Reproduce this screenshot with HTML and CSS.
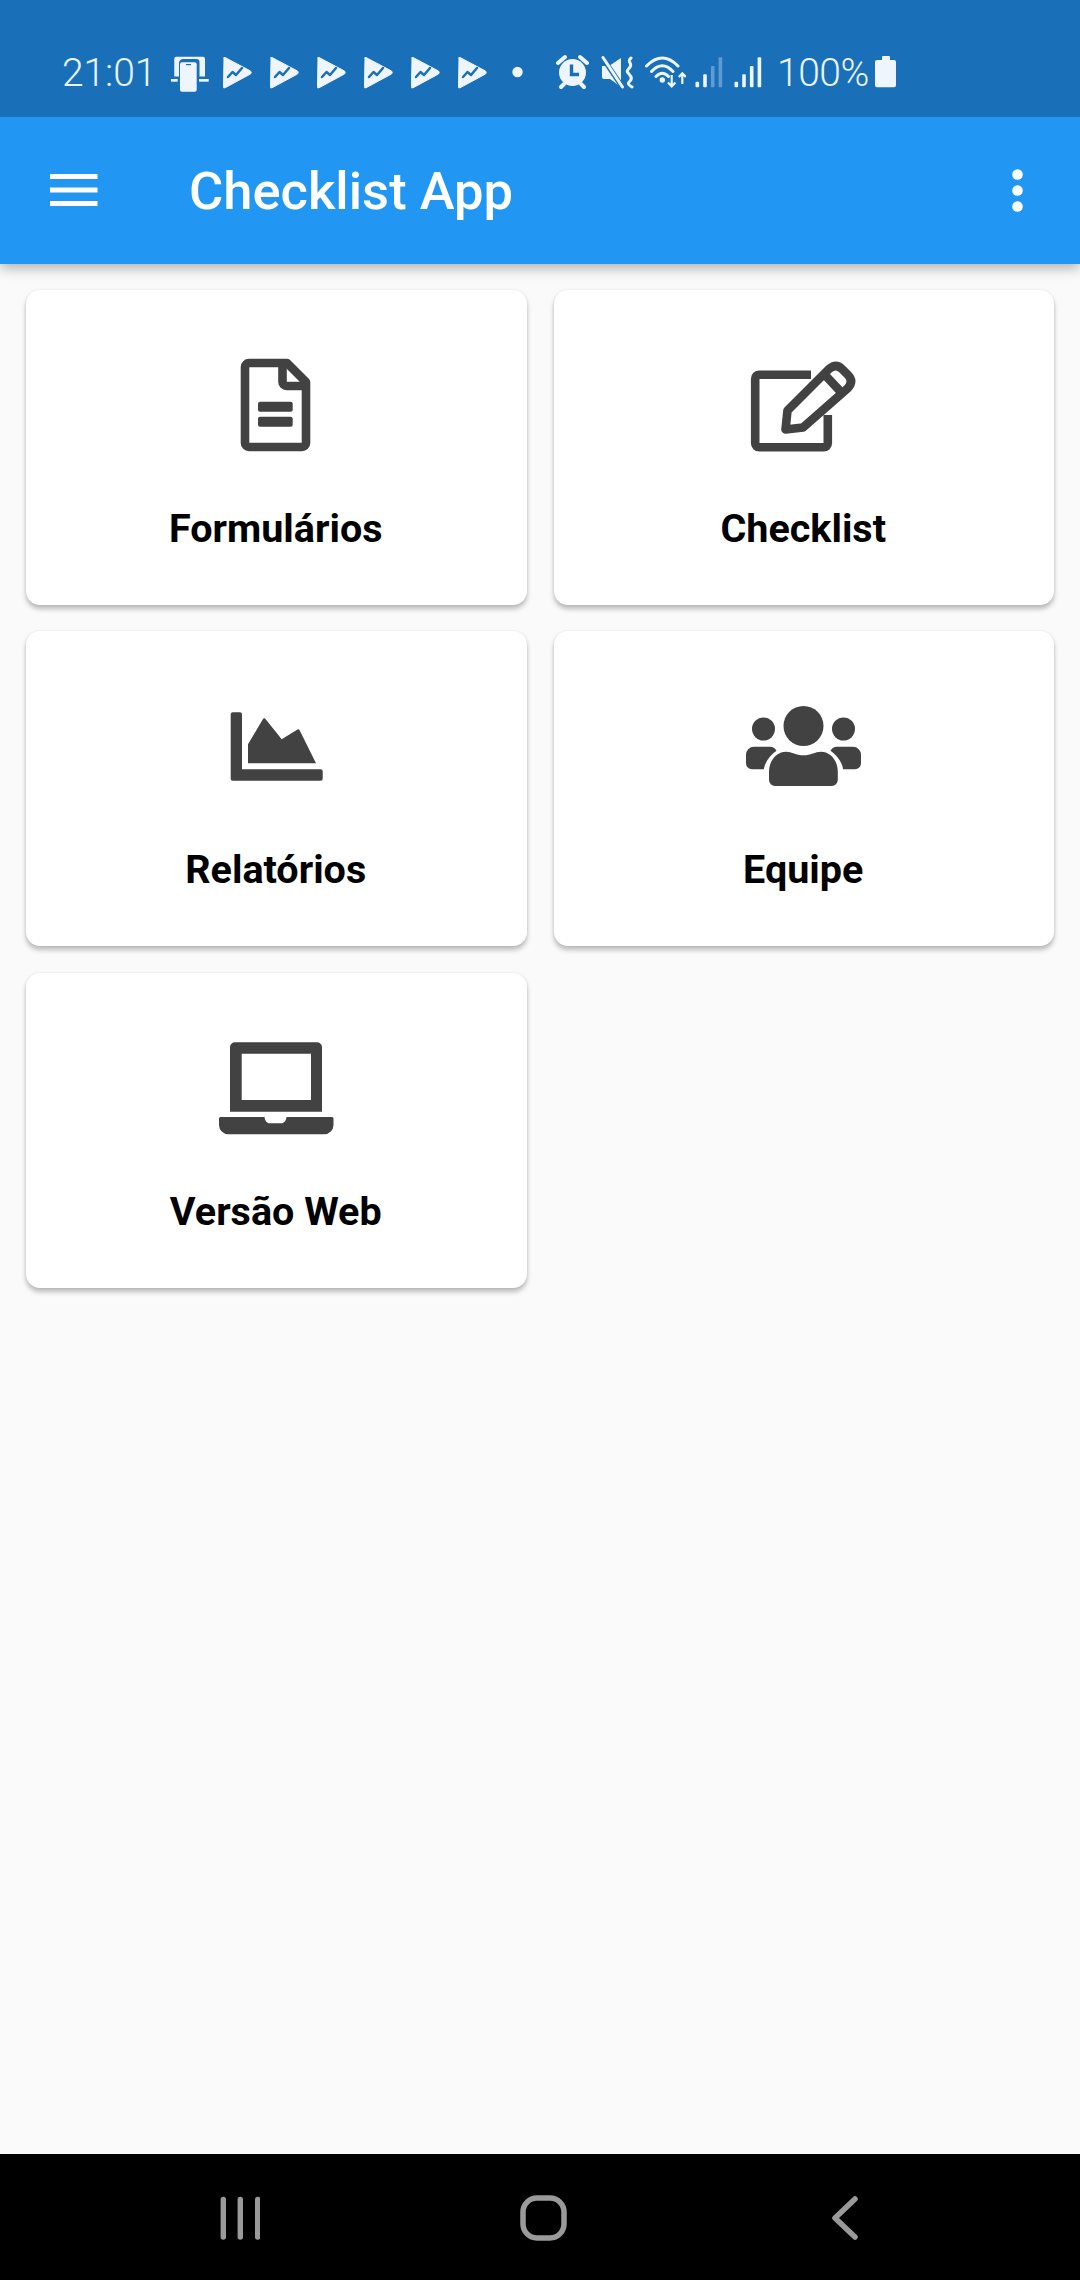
FILE: index.html
```html
<!DOCTYPE html>
<html lang="pt">
<head>
<meta charset="utf-8">
<title>Checklist App</title>
<link rel="stylesheet" href="styles.css">
</head>
<body>
<svg class="defs" width="0" height="0" aria-hidden="true">
  <symbol id="play" viewBox="0 0 29 40">
    <path class="si" d="M1 7 Q0 5 2 5.5 L27.5 19 Q29 20.5 27.5 22 L2 35.8 Q0 36.5 0.5 34.5 Z" stroke="#eef5fc" stroke-width="1" stroke-linejoin="round"/>
    <path class="sd" d="M5 25 L9.5 20 L13 23 L19 16"/>
  </symbol>
</svg>
<div class="page">
  <header class="top">
    <div class="status">
      <span class="clock">21:01</span>
      <svg class="ic-link" viewBox="0 0 38 40" width="38" height="40">
        <path class="si" d="M3.3 24.5V6.7a2 2 0 0 1 2-2h26.7a2 2 0 0 1 2 2v17.8h-5.5V10a3 3 0 0 0-3-3H12a4.500 4.500 0 0 0-4 3.500v14z"/>
        <rect class="si" x="0" y="27" width="6.700" height="2.700"/>
        <rect class="si" x="28" y="27" width="9.700" height="2.700"/>
        <rect class="si" x="9" y="10.300" width="16.700" height="29.400" rx="2"/>
        <rect class="sk" x="15" y="12" width="5" height="1.200"/>
      </svg>
      <svg class="ic-play first" width="29" height="40"><use href="#play"/></svg>
      <svg class="ic-play" width="29" height="40"><use href="#play"/></svg>
      <svg class="ic-play" width="29" height="40"><use href="#play"/></svg>
      <svg class="ic-play" width="29" height="40"><use href="#play"/></svg>
      <svg class="ic-play" width="29" height="40"><use href="#play"/></svg>
      <svg class="ic-play" width="29" height="40"><use href="#play"/></svg>
      <svg class="ic-dot" viewBox="0 0 11 40" width="11" height="40"><circle class="si" cx="5.500" cy="20" r="5.200"/></svg>
      <svg class="ic-alarm" viewBox="0 0 34 40" width="34" height="40">
        <circle class="si" cx="16.500" cy="20.500" r="13.500"/>
        <path class="sl sl-thick" d="M2 11L9 5M31 11L24 5"/>
        <path class="sl sl-thick" d="M8 32l-3 3M25 32l3 3"/>
        <path class="sd sd-thick" d="M15.500 12.500V22.500h7.500"/>
      </svg>
      <svg class="ic-mute" viewBox="0 0 33 40" width="33" height="40">
        <path class="si" d="M1 14H8L20 6V35L9 27H3a2 2 0 0 1-2-2z"/>
        <path class="sg" d="M-1 2L22 36"/>
        <path class="sl" d="M2 5.500L21.500 35"/>
        <path class="sl" d="M30 6c-5 4 2 5-1 9s-4 4-1 7 3 5 1 7-3 3 2 6"/>
      </svg>
      <svg class="ic-wifi" viewBox="0 0 41 40" width="41" height="40">
        <path class="sw" d="M1.500 14Q17.300-2 33 14M6.500 19.500Q17.300 8 28 19.500M11 24.500Q17.300 18 23.500 24.500"/>
        <circle class="si" cx="17.300" cy="28" r="2.700"/>
        <path class="sa" d="M26.700 23V34M23 30.500l3.700 4 3.700-4M37.300 32V21.500M33.800 25l3.500-3.700 3.500 3.700"/>
      </svg>
      <svg class="ic-sig" viewBox="0 0 28 40" width="28" height="40">
        <rect class="si" x="0.500" y="29.700" width="3.600" height="5.600" rx="1"/>
        <rect class="si" x="8.200" y="22.300" width="3.600" height="13" rx="1"/>
        <rect class="sq" x="15.900" y="14" width="3.600" height="21.300" rx="1"/>
        <rect class="sq" x="23.600" y="5.300" width="3.600" height="30" rx="1"/>
      </svg>
      <svg class="ic-sig2" viewBox="0 0 28 40" width="28" height="40">
        <rect class="si" x="0.500" y="29.700" width="3.600" height="5.600" rx="1"/>
        <rect class="si" x="8.200" y="22.300" width="3.600" height="13" rx="1"/>
        <rect class="si" x="15.900" y="14" width="3.600" height="21.300" rx="1"/>
        <rect class="si" x="23.600" y="5.300" width="3.600" height="30" rx="1"/>
      </svg>
      <span class="pct">100%</span>
      <svg class="ic-batt" viewBox="0 0 22 40" width="22" height="40">
        <path class="si" d="M7 5a1 1 0 0 1 1-1h6a1 1 0 0 1 1 1v3h4a2 2 0 0 1 2 2v23.300a2 2 0 0 1-2 2H2a2 2 0 0 1-2-2V10a2 2 0 0 1 2-2h5z"/>
      </svg>
    </div>
    <div class="appbar">
      <svg class="menu" viewBox="0 0 48 33" width="48" height="33">
        <rect x="0" y="0" width="47.500" height="5"/>
        <rect x="0" y="13.500" width="47.500" height="5"/>
        <rect x="0" y="27" width="47.500" height="5"/>
      </svg>
      <h1 class="title">Checklist App</h1>
      <svg class="kebab" viewBox="0 0 11 43" width="11" height="43">
        <circle cx="5.500" cy="5.500" r="5.300"/>
        <circle cx="5.500" cy="21.500" r="5.300"/>
        <circle cx="5.500" cy="37.500" r="5.300"/>
      </svg>
    </div>
  </header>

  <main class="grid">
    <div class="card">
      <svg class="icon" viewBox="0 0 120 100" width="120" height="100">
        <path class="line" d="M33 8H71L90 27V88a4 4 0 0 1-4 4H33a4 4 0 0 1-4-4V12a4 4 0 0 1 4-4z"/>
        <path class="line" d="M66.500 8V27a4 4 0 0 0 4 4H90"/>
        <rect class="solid" x="42" y="46.700" width="34.700" height="10" rx="2"/>
        <rect class="solid" x="42" y="61.700" width="34.700" height="10" rx="2"/>
      </svg>
      <div class="label">Formulários</div>
    </div>
    <div class="card">
      <svg class="icon" viewBox="0 0 120 100" width="120" height="100">
        <path class="line line-butt" d="M67 19.700H15.200a4 4 0 0 0-4 4V88.300a4 4 0 0 0 4 4H79.800a4 4 0 0 0 4-4V60"/>
        <path class="line" d="M41.500 74.500L43.500 55.500L85 14Q92 8 98 14L104 20Q110 26 104 33L59 72.500Z"/>
        <path class="line line-butt" d="M81 20L96 36"/>
      </svg>
      <div class="label">Checklist</div>
    </div>
    <div class="card">
      <svg class="icon" viewBox="0 0 120 100" width="120" height="100">
        <path class="solid" d="M16.700 16.300H24a2 2 0 0 1 2 2V73.300H104.700a2 2 0 0 1 2 2V82.700a2 2 0 0 1-2 2H16.700a2 2 0 0 1-2-2V18.300a2 2 0 0 1 2-2z"/>
        <path class="solid" d="M32 67.300V48.300L47 23a1.500 1.500 0 0 1 2.500 0L65.700 43.300L81.500 33.500a1.500 1.500 0 0 1 2 .5L100 67.300Z"/>
      </svg>
      <div class="label">Relatórios</div>
    </div>
    <div class="card">
      <svg class="icon" viewBox="0 0 120 100" width="120" height="100">
        <circle class="solid" cx="59.500" cy="30" r="20"/>
        <circle class="solid" cx="19.500" cy="33" r="11.500"/>
        <circle class="solid" cx="99.500" cy="33" r="11.500"/>
        <path class="solid" d="M31 90a6 6 0 0 1-6-6V76C25 64 33 55.700 42 55.700C48 55.700 52 59.300 59.500 59.300C67 59.300 71 55.700 77 55.700C86 55.700 93.800 64 93.800 76V84a6 6 0 0 1-6 6Z"/>
        <path class="solid" d="M19.800 73.300H8a6 6 0 0 1-6-6V59a8 8 0 0 1 8-8.300H26a8 8 0 0 1 6.500 4C26 59 21 66 19.800 73.300Z"/>
        <path class="solid" transform="matrix(-1 0 0 1 119 0)" d="M19.800 73.300H8a6 6 0 0 1-6-6V59a8 8 0 0 1 8-8.300H26a8 8 0 0 1 6.500 4C26 59 21 66 19.800 73.300Z"/>
      </svg>
      <div class="label">Equipe</div>
    </div>
    <div class="card">
      <svg class="icon" viewBox="0 0 120 100" width="120" height="100">
        <path class="solid" fill-rule="evenodd" d="M19 4.300H101a5 5 0 0 1 5 5V73.700H14V9.300a5 5 0 0 1 5-5zM25.700 15.700V62H95V15.700z"/>
        <path class="solid" d="M4.500 79H48.500C49 83 51 85.300 54 85.300H65C68 85.300 70 83 70.500 79H116a1.500 1.500 0 0 1 1.500 1.500V87a9.300 9.300 0 0 1-9.300 9.300H12.300A9.300 9.300 0 0 1 3 87V80.500A1.500 1.500 0 0 1 4.500 79z"/>
      </svg>
      <div class="label">Versão Web</div>
    </div>
  </main>

  <nav class="nav">
    <svg class="nav-recent" viewBox="0 0 40 44" width="40" height="44">
      <rect x="0.600" y="0.700" width="5.400" height="43" rx="2.700"/>
      <rect x="17.600" y="0.700" width="5.400" height="43" rx="2.700"/>
      <rect x="35" y="0.700" width="5.400" height="43" rx="2.700"/>
    </svg>
    <svg class="nav-home" viewBox="0 0 47 46" width="47" height="46">
      <rect x="3" y="3" width="41" height="40" rx="14"/>
    </svg>
    <svg class="nav-back" viewBox="0 0 26 44" width="26" height="44">
      <path d="M23 3L3 22L23 41"/>
    </svg>
  </nav>
</div>
</body>
</html>
```
FILE: styles.css
```css
* { box-sizing: border-box; }
html, body { margin: 0; padding: 0; }
body { background: #fafafa; font-family: Roboto, "Liberation Sans", sans-serif; }
.defs { position: absolute; }
.page { width: 1080px; height: 2280px; display: flex; flex-direction: column; overflow: hidden; }

.top { position: relative; z-index: 2; box-shadow: 0 4px 12px rgba(0,0,0,.3); flex: none; }
.status { height: 117px; background: #1a70b8; display: flex; align-items: flex-start; padding: 52px 0 0 62px; color: #eaf4fd; }
.status svg { flex: none; display: block; }
.clock, .pct { font-size: 39px; line-height: 42px; font-weight: 300; white-space: nowrap; flex: none; }
.clock { width: 91px; letter-spacing: -.1px; }
.pct { width: 90px; margin-left: 15px; letter-spacing: -.5px; }
.si { fill: #eef5fc; }
.sq { fill: #5f9ad3; }
.sk { fill: #1a70b8; }
.sd { fill: none; stroke: #1a70b8; stroke-width: 2.5; stroke-linecap: round; stroke-linejoin: round; }
.sd-thick { stroke-width: 3.4; stroke-linecap: butt; stroke-linejoin: miter; }
.sl { fill: none; stroke: #eef5fc; stroke-width: 3; stroke-linecap: round; }
.sl-thick { stroke-width: 4; }
.sg { fill: none; stroke: #1a70b8; stroke-width: 5; }
.sw { fill: none; stroke: #eef5fc; stroke-width: 3; stroke-linecap: round; }
.sa { fill: none; stroke: #eef5fc; stroke-width: 2.2; }
.ic-link { margin-left: 18px; }
.ic-play { margin-left: 18px; }
.ic-play.first { margin-left: 14px; }
.ic-dot { margin-left: 25px; }
.ic-alarm { margin-left: 33px; }
.ic-mute { margin-left: 11px; }
.ic-wifi { margin-left: 11px; }
.ic-sig { margin-left: 9px; }
.ic-sig2 { margin-left: 11px; }
.ic-batt { margin-left: 8px; }

.appbar { height: 147px; background: #2196f3; display: flex; align-items: center; padding-left: 50px; color: #fff; }
.menu { fill: #fff; flex: none; }
.title { margin: 0 0 0 91px; flex: 1; font-size: 52.5px; font-weight: 500; line-height: 60px; }
.kebab { fill: #fff; flex: none; margin-right: 57px; }

.grid { flex: 1; display: grid; grid-template-columns: 500.5px 500.5px; grid-auto-rows: 315px; column-gap: 27px; row-gap: 26.4px; padding: 26px; align-content: start; }
.card { background: #fff; border-radius: 14px; box-shadow: 0 4px 5px rgba(0,0,0,.25), 0 0 3px rgba(0,0,0,.08); display: flex; flex-direction: column; align-items: center; padding-top: 65px; }
.icon { display: block; flex: none; }
.line { fill: none; stroke: #424242; stroke-width: 8.6; stroke-linejoin: round; }
.line-butt { stroke-linecap: butt; }
.solid { fill: #424242; }
.label { margin-top: 49px; padding-right: 1px; font-size: 39.5px; line-height: 50px; font-weight: 700; color: #000; text-align: center; }

.nav { height: 126px; flex: none; background: #000; display: flex; align-items: center; justify-content: space-between; padding: 2px 222px 0 220px; }
.nav-recent { fill: #9a9a9a; }
.nav-home { fill: none; stroke: #9a9a9a; stroke-width: 5.5; margin-right: 6px; }
.nav-back { fill: none; stroke: #9a9a9a; stroke-width: 5.5; stroke-linecap: round; stroke-linejoin: round; }
```
